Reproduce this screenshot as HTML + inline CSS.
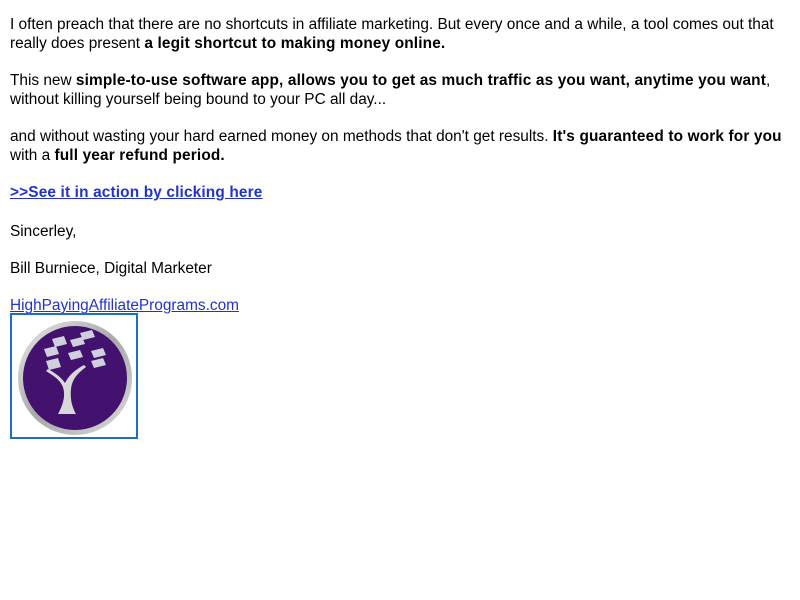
<!DOCTYPE html>
<html><head><style>
body{margin:0;padding:15px 10px 0 10px;font-family:"Liberation Sans",Arial,sans-serif;font-size:15.4px;line-height:19px;color:#000;}
p{margin:0 0 18px 0;}
b{letter-spacing:0.15px;}
a{color:#2233cc;}
.box{position:absolute;left:10px;top:313px;width:124px;height:122px;border:2px solid #1f6fbf;background:#fff;}
</style></head><body>
<p>I often preach that there are no shortcuts in affiliate marketing. But every once and a while, a tool comes out that really does present <b>a legit shortcut to making money online.</b></p>
<p>This new <b>simple-to-use software app, allows you to get as much traffic as you want, anytime you want</b>, without killing yourself being bound to your PC all day...</p>
<p>and without wasting your hard earned money on methods that don't get results. <b>It's guaranteed to work for you</b> with a <b>full year refund period.</b></p>
<p style="margin-bottom:20px"><a href="#"><b>&gt;&gt;See it in action by clicking here</b></a></p>
<p>Sincerley,</p>
<p>Bill Burniece, Digital Marketer</p>
<p style="margin-bottom:0"><a href="#">HighPayingAffiliatePrograms.com</a></p>
<div class="box">
<svg width="124" height="122" viewBox="0 0 124 122">
<defs><linearGradient id="g" x1="0" y1="0" x2="1" y2="1"><stop offset="0" stop-color="#e8e8e8"/><stop offset="0.5" stop-color="#a8a8a8"/><stop offset="1" stop-color="#dcdcdc"/></linearGradient></defs>
<circle cx="63" cy="63" r="57" fill="url(#g)"/>
<circle cx="63" cy="63" r="52" fill="#43126e"/>
<path d="M46 99 C52 88 54 78 50 70 C46 63 40 60 34 56 L36 54 C43 58 49 62 53 68 C57 60 63 55 72 50 L74 52 C66 58 60 64 59 74 C58 84 60 92 64 99 Z" fill="#d8d8d8"/>
<g fill="#d0d0dc">
<path d="M40 24 l12 -3 l3 8 l-12 3z"/><path d="M58 25 l12 -3 l3 7 l-12 3z"/><path d="M68 18 l12 -3 l3 7 l-12 3z"/>
<path d="M32 34 l12 -3 l3 8 l-12 3z"/><path d="M56 38 l12 -3 l3 7 l-12 3z"/><path d="M79 36 l12 -3 l3 7 l-12 3z"/>
<path d="M34 46 l12 -3 l3 9 l-12 3z"/><path d="M79 46 l12 -3 l3 7 l-12 3z"/>
</g>
</svg>
</div>
</body></html>
